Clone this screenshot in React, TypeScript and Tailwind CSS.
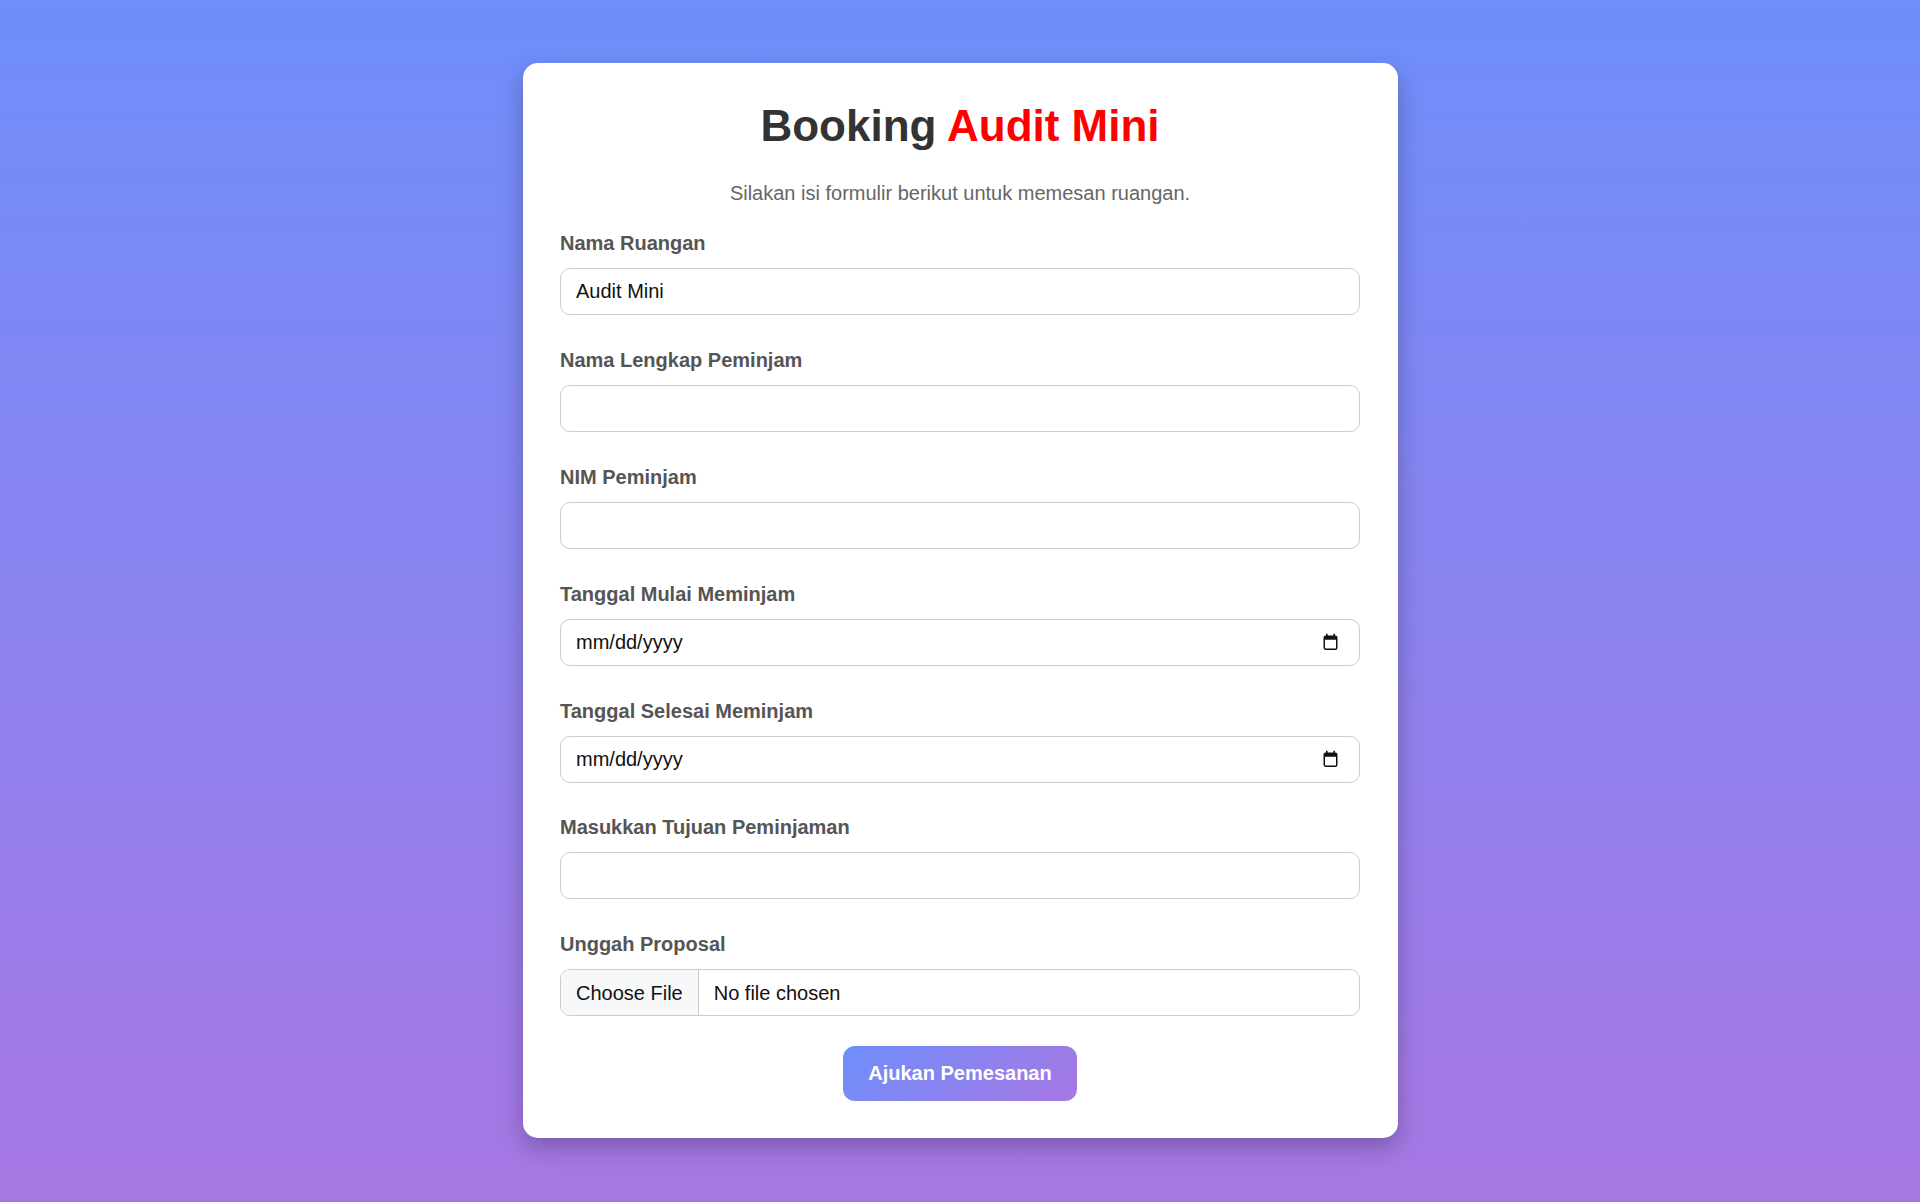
import React from "react";

const CalendarIcon = () => (
  <svg width="17" height="18" viewBox="0 0 16 18" fill="none" aria-hidden="true">
    <rect x="1.75" y="3.25" width="12.5" height="13" rx="1.5" stroke="#111" strokeWidth="1.5" />
    <rect x="1.75" y="3.25" width="12.5" height="3.5" fill="#111" />
    <rect x="3.5" y="0.75" width="1.6" height="3" fill="#111" />
    <rect x="10.9" y="0.75" width="1.6" height="3" fill="#111" />
  </svg>
);

const Label = ({ children }: { children: React.ReactNode }) => (
  <label className="block h-[23px] leading-[23px] mt-[0.5px] mb-[13px] text-[20px] font-bold text-[#555]">
    {children}
  </label>
);

const TextInput = ({ value }: { value?: string }) => (
  <input
    type="text"
    defaultValue={value}
    className="block w-full h-[47px] px-[15px] border border-[#ccc] rounded-[10px] bg-white text-[20px] text-[#111] outline-none"
    style={{ fontFamily: '"Liberation Sans", Arial, sans-serif' }}
  />
);

const DateInput = () => (
  <div className="flex items-center justify-between w-full h-[47px] pl-[15px] pr-[20px] border border-[#ccc] rounded-[10px] bg-white text-[20px] text-[#111]">
    <span>mm/dd/yyyy</span>
    <CalendarIcon />
  </div>
);

const FileInput = () => (
  <div className="flex items-stretch w-full h-[47px] border border-[#ccc] rounded-[10px] bg-white text-[20px] text-[#111] overflow-hidden">
    <div className="flex items-center px-[15px] bg-[#f7f8f9] border-r border-[#ccc]">Choose File</div>
    <div className="flex items-center pl-[15px]">No file chosen</div>
  </div>
);

const Field = ({ label, children }: { label: string; children: React.ReactNode }) => (
  <div>
    <Label>{label}</Label>
    {children}
  </div>
);

export default function App() {
  return (
    <div
      className="min-h-screen w-full bg-[linear-gradient(to_bottom,#6e8efb,#a777e3)] pt-[63px] pb-[65px]"
      style={{ fontFamily: '"Liberation Sans", Arial, sans-serif' }}
    >
      <div className="mx-auto w-[875px] bg-white rounded-[15px] px-[37.5px] pt-[38px] pb-[37px] shadow-[0_10px_25px_rgba(0,0,0,0.25)]">
        <h1 className="text-center text-[44px] leading-[49px] font-bold text-[#333]">
          Booking <span className="text-[#ff0000]">Audit Mini</span>
        </h1>
        <p className="mt-[31.5px] text-center text-[20px] leading-[23px] text-[#666]">
          Silakan isi formulir berikut untuk memesan ruangan.
        </p>
        <form className="mt-[27px] flex flex-col gap-[33.4px]" onSubmit={(e) => e.preventDefault()}>
          <Field label="Nama Ruangan">
            <TextInput value="Audit Mini" />
          </Field>
          <Field label="Nama Lengkap Peminjam">
            <TextInput />
          </Field>
          <Field label="NIM Peminjam">
            <TextInput />
          </Field>
          <Field label="Tanggal Mulai Meminjam">
            <DateInput />
          </Field>
          <Field label="Tanggal Selesai Meminjam">
            <DateInput />
          </Field>
          <Field label="Masukkan Tujuan Peminjaman">
            <TextInput />
          </Field>
          <Field label="Unggah Proposal">
            <FileInput />
          </Field>
        </form>
        <div className="mt-[29.6px] flex justify-center">
          <button
            type="button"
            className="h-[55px] w-[234px] rounded-[12px] bg-[linear-gradient(135deg,#6e8efb,#a777e3)] text-white text-[20px] font-bold"
          >
            Ajukan Pemesanan
          </button>
        </div>
      </div>
    </div>
  );
}
